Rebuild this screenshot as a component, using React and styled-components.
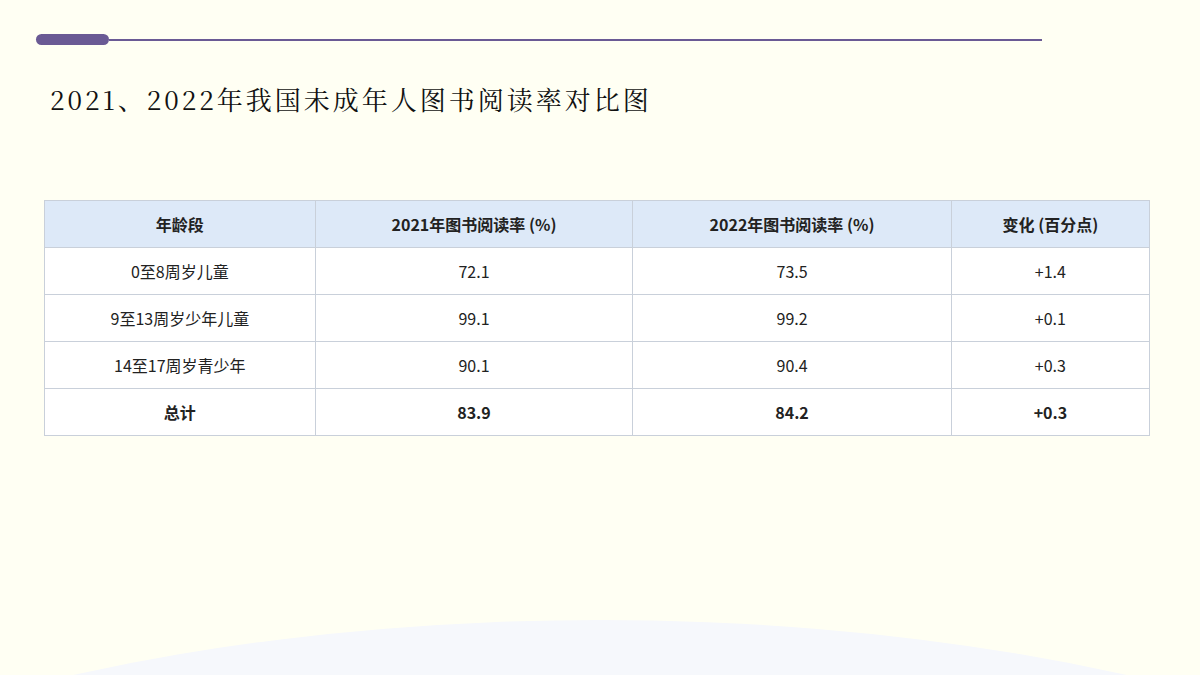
import React from "react";
import styled, { createGlobalStyle } from "styled-components";

const G = createGlobalStyle`
  html,body{margin:0;padding:0;}
  body{font-family:"Noto Sans CJK SC","Noto Sans",sans-serif;}
`;
const Page = styled.div`
  position:relative;width:1200px;height:675px;overflow:hidden;background:#fffff3;
  padding:34px 44px 0 36px;box-sizing:border-box;
`;
const Wave = styled.div`
  position:absolute;left:-500px;top:620px;width:2200px;height:900px;border-radius:50%;
  background:#f6f8fc;
`;
const Rule = styled.div`display:flex;align-items:center;width:1006px;`;
const Pill = styled.div`width:73px;height:11px;border-radius:6px;background:#6a5a94;`;
const Line = styled.div`flex:1;height:2px;background:#6a5a94;`;
const Title = styled.h1`
  margin:38px 0 0 14px;font-size:26px;font-weight:400;color:#111;letter-spacing:3px;
  font-family:"Noto Serif CJK SC","Noto Sans CJK SC",serif;line-height:1.2;
`;
const Table = styled.table`
  position:relative;margin:86px 0 0 8px;width:1106px;border-collapse:collapse;font-size:16px;color:#222;
`;
const Th = styled.th`
  height:46px;background:#dde9f8;border:1px solid #c9d0da;font-weight:700;padding:0;
  width:${p=>p.w}px;
`;
const Td = styled.td`
  height:46px;background:#fff;border:1px solid #c9d0da;text-align:center;padding:0;
  font-weight:${p=>p.b?700:400};
`;
const rows=[["0至8周岁儿童","72.1","73.5","+1.4"],["9至13周岁少年儿童","99.1","99.2","+0.1"],["14至17周岁青少年","90.1","90.4","+0.3"],["总计","83.9","84.2","+0.3"]];
export default function App(){
  return <Page><G/><Wave/>
    <Rule><Pill/><Line/></Rule>
    <Title>2021、2022年我国未成年人图书阅读率对比图</Title>
    <Table><thead><tr><Th w={271}>年龄段</Th><Th w={318}>2021年图书阅读率 (%)</Th><Th w={319}>2022年图书阅读率 (%)</Th><Th w={198}>变化 (百分点)</Th></tr></thead>
    <tbody>{rows.map((r,i)=><tr key={i}>{r.map((c,j)=><Td key={j} b={i===3}>{c}</Td>)}</tr>)}</tbody></Table>
  </Page>;
}
